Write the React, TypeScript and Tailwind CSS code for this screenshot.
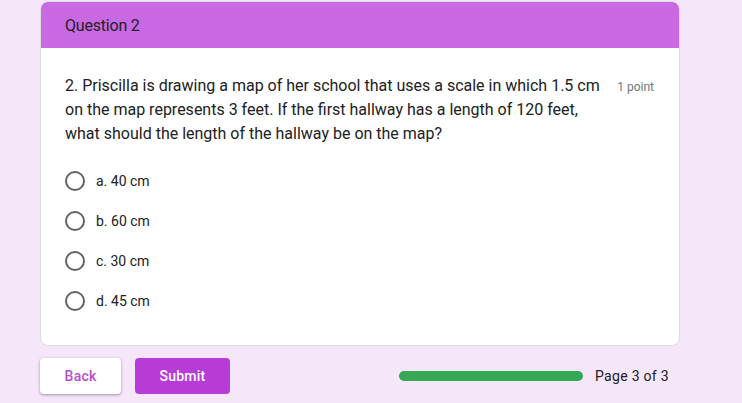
import React from "react";

export default function App() {
  const options = ["a. 40 cm", "b. 60 cm", "c. 30 cm", "d. 45 cm"];
  return (
    <div className="w-[742px] h-[403px] bg-[#f5e6fa] overflow-hidden">
      <div className="ml-[40px] w-[640px] pt-[1px]">
        <div className="rounded-[8px] border border-[#dadce0] bg-white overflow-hidden">
          <div className="h-[47px] bg-[#c869e3] flex items-center pl-[25px] -mx-px -mt-px">
            <span className="text-[16px] text-[#202124] font-['Roboto',sans-serif] tracking-[-0.2px] pt-[2px]">Question 2</span>
          </div>
          <div className="pl-[24px] pr-[24px] pt-[26px] pb-[24px]">
            <div className="flex justify-between">
              <div className="w-[545px] text-[16px] leading-[24px] text-[#202124] font-['Roboto',sans-serif]">
                2. Priscilla is drawing a map of her school that uses a scale in which 1.5 cm on the map represents 3 feet. If the first hallway has a length of 120 feet, what should the length of the hallway be on the map?
              </div>
              <div className="text-[12px] text-[#70757a] font-['Roboto',sans-serif] pt-[4px] pr-[1px]">1 point</div>
            </div>
            <div className="mt-[15px] flex flex-col">
              {options.map((o) => (
                <div key={o} className="h-[40px] flex items-center">
                  <div className="w-[20px] h-[20px] rounded-full border-2 border-[#5f6368]" />
                  <span className="ml-[11px] text-[14px] text-[#202124] font-['Roboto',sans-serif]">{o}</span>
                </div>
              ))}
            </div>
          </div>
        </div>
        <div className="mt-[12px] flex items-center">
          <div className="w-[81px] h-[36px] rounded-[4px] bg-white shadow-[0_1px_2px_rgba(60,64,67,0.3),0_1px_3px_1px_rgba(60,64,67,0.15)] flex items-center justify-center">
            <span className="text-[14px] font-medium text-[#b450cc] font-['Roboto',sans-serif] tracking-[0.2px]">Back</span>
          </div>
          <div className="ml-[14px] w-[95px] h-[36px] rounded-[4px] bg-[#b93bd7] flex items-center justify-center">
            <span className="text-[14px] font-medium text-white font-['Roboto',sans-serif] tracking-[0.2px]">Submit</span>
          </div>
          <div className="ml-[169px] w-[184px] h-[10px] rounded-full bg-[#34a853]" />
          <span className="ml-[12px] text-[14px] text-[#202124] font-['Roboto',sans-serif] tracking-[0.3px]">Page 3 of 3</span>
        </div>
      </div>
    </div>
  );
}
